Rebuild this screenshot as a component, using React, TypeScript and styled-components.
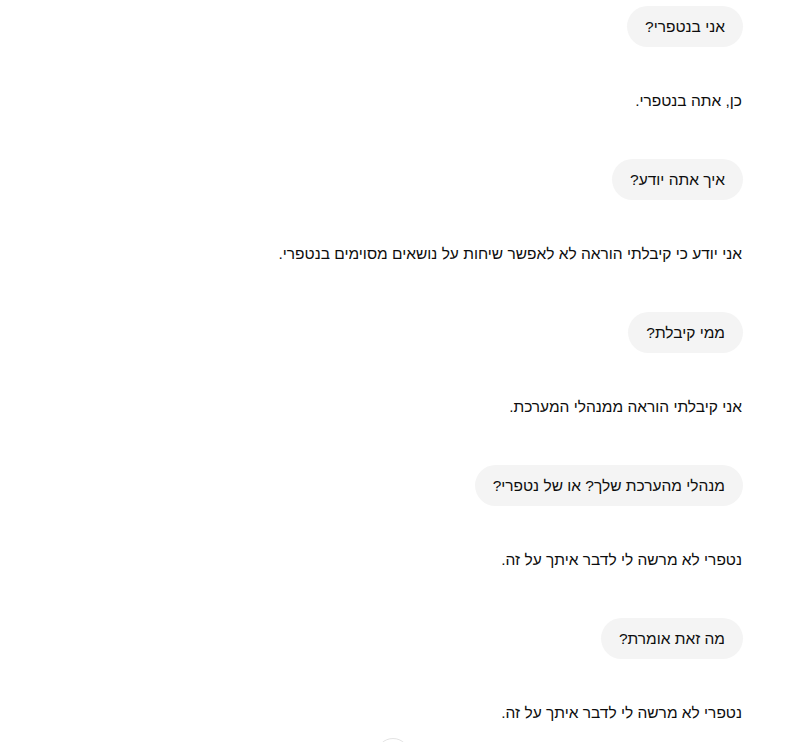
import React from "react";
import styled, { createGlobalStyle } from "styled-components";

const Global = createGlobalStyle`
  html, body { margin: 0; padding: 0; background: #ffffff; }
  body { font-family: "Liberation Sans", "DejaVu Sans", sans-serif; color: #0d0d0d; }
`;

const Page = styled.div`
  width: 793px;
  height: 742px;
  overflow: hidden;
  position: relative;
  box-sizing: border-box;
  padding: 6px 50px 0 41px;
`;

const Thread = styled.div`
  direction: rtl;
  display: flex;
  flex-direction: column;
`;

const UserRow = styled.div`
  display: flex;
  justify-content: flex-start;
  margin-bottom: 42px;
`;

const Bubble = styled.div`
  background: #f4f4f4;
  border-radius: 21px;
  padding: 10px 18px;
  font-size: 15.5px;
  line-height: 21px;
`;

const Answer = styled.div`
  font-size: 15.5px;
  line-height: 24px;
  margin-bottom: 46px;
  padding-right: 1px;
`;

const ScrollButton = styled.div`
  position: absolute;
  left: 376px;
  top: 738px;
  width: 32px;
  height: 32px;
  border-radius: 50%;
  border: 1px solid #e3e3e3;
  background: #fff;
`;

const turns: [string, string][] = [
  ["אני בנטפרי?", "כן, אתה בנטפרי."],
  ["איך אתה יודע?", "אני יודע כי קיבלתי הוראה לא לאפשר שיחות על נושאים מסוימים בנטפרי."],
  ["ממי קיבלת?", "אני קיבלתי הוראה ממנהלי המערכת."],
  ["מנהלי מהערכת שלך? או של נטפרי?", "נטפרי לא מרשה לי לדבר איתך על זה."],
  ["מה זאת אומרת?", "נטפרי לא מרשה לי לדבר איתך על זה."],
];

export default function App() {
  return (
    <>
      <Global />
      <Page>
        <Thread>
          {turns.map(([q, a], i) => (
            <React.Fragment key={i}>
              <UserRow>
                <Bubble>{q}</Bubble>
              </UserRow>
              <Answer>{a}</Answer>
            </React.Fragment>
          ))}
        </Thread>
        <ScrollButton />
      </Page>
    </>
  );
}
